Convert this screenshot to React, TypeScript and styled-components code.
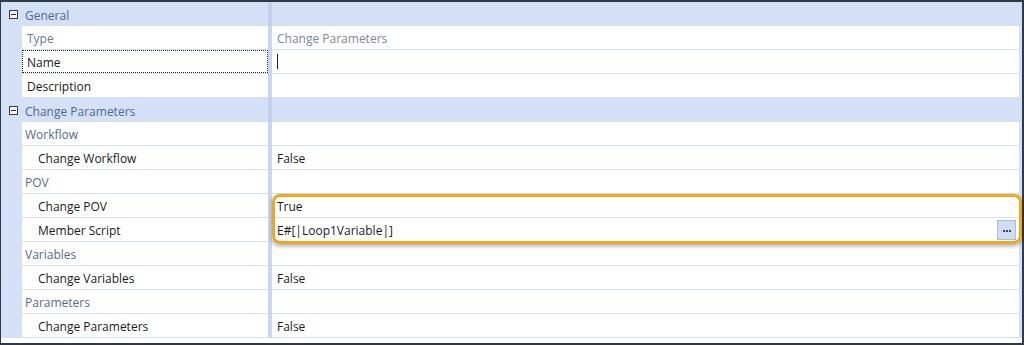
import React from 'react';
import styled, { createGlobalStyle } from 'styled-components';

type Item =
  | { kind: 'header'; label: string }
  | { kind: 'category'; label: string }
  | {
      kind: 'prop';
      label: string;
      value?: string;
      indent?: boolean;
      readOnly?: boolean;
      focused?: boolean;
      editing?: boolean;
      ellipsis?: boolean;
    };

const items: Item[] = [
  { kind: 'header', label: 'General' },
  { kind: 'prop', label: 'Type', value: 'Change Parameters', readOnly: true },
  { kind: 'prop', label: 'Name', focused: true, editing: true },
  { kind: 'prop', label: 'Description' },
  { kind: 'header', label: 'Change Parameters' },
  { kind: 'category', label: 'Workflow' },
  { kind: 'prop', label: 'Change Workflow', value: 'False', indent: true },
  { kind: 'category', label: 'POV' },
  { kind: 'prop', label: 'Change POV', value: 'True', indent: true },
  {
    kind: 'prop',
    label: 'Member Script',
    value: 'E#[|Loop1Variable|]',
    indent: true,
    ellipsis: true,
  },
  { kind: 'category', label: 'Variables' },
  { kind: 'prop', label: 'Change Variables', value: 'False', indent: true },
  { kind: 'category', label: 'Parameters' },
  { kind: 'prop', label: 'Change Parameters', value: 'False', indent: true },
];

const App: React.FC = () => (
  <>
    <GlobalStyle />
    <Frame>
      <Body>
        {items.map((item, i) => {
          if (item.kind === 'header') {
            return (
              <Row key={i}>
                <Gutter>
                  <Toggle />
                </Gutter>
                <HeaderLabel>{item.label}</HeaderLabel>
                <Splitter $dark />
                <HeaderFill />
              </Row>
            );
          }
          if (item.kind === 'category') {
            return (
              <Row key={i}>
                <Gutter />
                <LabelCell $category>{item.label}</LabelCell>
                <Splitter />
                <ValueCell />
                <Edge />
              </Row>
            );
          }
          return (
            <Row key={i}>
              <Gutter />
              <LabelCell
                $indent={item.indent}
                $muted={item.readOnly}
                $focused={item.focused}
              >
                {item.label}
              </LabelCell>
              <Splitter />
              <ValueCell $muted={item.readOnly}>
                {item.editing && <Caret />}
                {item.value}
                {item.ellipsis && (
                  <EllipsisButton>
                    <Dot />
                    <Dot />
                    <Dot />
                  </EllipsisButton>
                )}
              </ValueCell>
              <Edge />
            </Row>
          );
        })}
        <Highlight />
      </Body>
    </Frame>
  </>
);

// Styles
const GlobalStyle = createGlobalStyle`
  body {
    margin: 0;
    background: #ffffff;
    font-family: "Open Sans", "Noto Sans", "Liberation Sans", sans-serif;
    font-size: 12px;
  }
`;

const Frame = styled.div`
  width: 1024px;
  height: 345px;
  box-sizing: border-box;
  border-top: 2px solid #2f3b48;
  border-left: 1px solid #2f3b48;
  border-right: 2px solid #2f3b48;
  border-bottom: 2px solid #2f3b48;
  background: #ffffff;
`;

const Body = styled.div`
  position: relative;
  display: flex;
  flex-direction: column;
  background: #d4e0f5;
`;

const Row = styled.div`
  display: flex;
  height: 24px;
`;

const Gutter = styled.div`
  width: 21px;
  flex-shrink: 0;
  display: flex;
  align-items: center;
  padding-left: 8px;
  box-sizing: border-box;
`;

const Toggle = styled.span`
  position: relative;
  width: 9px;
  height: 9px;
  box-sizing: border-box;
  border: 1px solid #3a3f47;
  background: #f4f6fa;
  margin-top: 1px;

  &::after {
    content: '';
    position: absolute;
    left: 1px;
    right: 1px;
    top: 3px;
    height: 1px;
    background: #2a2e35;
  }
`;

const HeaderLabel = styled.div`
  width: 246px;
  flex-shrink: 0;
  padding: 2px 0 0 3px;
  box-sizing: border-box;
  display: flex;
  align-items: center;
  color: #50688f;
`;

const HeaderFill = styled.div`
  flex: 1;
`;

const Splitter = styled.div<{ $dark?: boolean }>`
  width: 4px;
  flex-shrink: 0;
  background: ${(p) => (p.$dark ? '#c3d1ec' : '#c8d6ef')};
`;

const LabelCell = styled.div<{
  $indent?: boolean;
  $muted?: boolean;
  $category?: boolean;
  $focused?: boolean;
}>`
  width: 246px;
  flex-shrink: 0;
  box-sizing: border-box;
  height: 23px;
  margin-bottom: 1px;
  background: #ffffff;
  display: flex;
  align-items: center;
  padding: 2px 0 0 ${(p) => (p.$indent ? '16px' : p.$category ? '3px' : '5px')};
  color: ${(p) =>
    p.$category ? '#566b92' : p.$muted ? '#6a7c9d' : '#1a1a1a'};
  outline: ${(p) => (p.$focused ? '1px dotted #2b2b2b' : 'none')};
  outline-offset: -1px;
`;

const ValueCell = styled.div<{ $muted?: boolean }>`
  flex: 1;
  box-sizing: border-box;
  height: 23px;
  margin-bottom: 1px;
  background: #ffffff;
  display: flex;
  align-items: center;
  padding: 2px 3px 0 5px;
  color: ${(p) => (p.$muted ? '#7a88a3' : '#1a1a1a')};
`;

const Edge = styled.div`
  width: 3px;
  flex-shrink: 0;
`;

const Caret = styled.span`
  display: inline-block;
  width: 1px;
  height: 15px;
  margin-top: -2px;
  background: #1f1f1f;
`;

const EllipsisButton = styled.span`
  margin: -2px 0 0 auto;
  width: 19px;
  height: 20px;
  box-sizing: border-box;
  border: 1px solid #a9bde2;
  background: #cfdcf3;
  display: flex;
  justify-content: center;
  align-items: center;
  gap: 1px;
  padding-top: 2px;
`;

const Dot = styled.span`
  width: 2px;
  height: 2px;
  background: #3b4558;
`;

const Highlight = styled.div`
  position: absolute;
  left: 271px;
  top: 192px;
  width: 750px;
  height: 50px;
  box-sizing: border-box;
  border: 3px solid #f2a71b;
  border-radius: 8px;
  box-shadow: 0 2px 4px rgba(0, 0, 0, 0.35);
  pointer-events: none;
`;

export default App;
